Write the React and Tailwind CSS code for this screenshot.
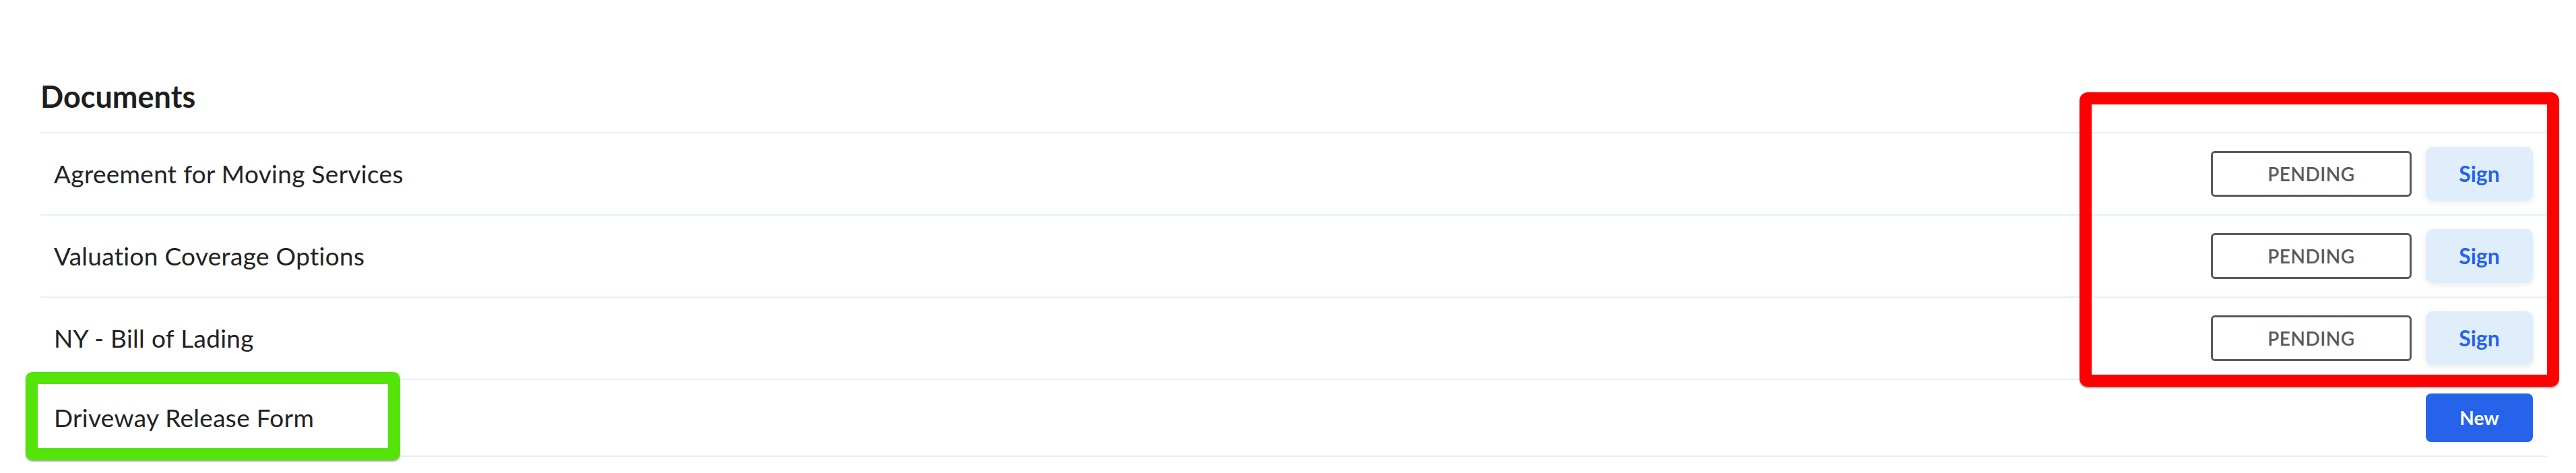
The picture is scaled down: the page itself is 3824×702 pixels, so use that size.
import React from "react";

const rows = [
  { name: "Agreement for Moving Services", status: "PENDING" },
  { name: "Valuation Coverage Options", status: "PENDING" },
  { name: "NY - Bill of Lading", status: "PENDING" },
  { name: "Driveway Release Form", status: null },
];

export default function App() {
  return (
    <div
      className="relative w-full h-[702px] bg-white overflow-hidden"
      style={{ fontFamily: "Lato, 'Open Sans', sans-serif" }}
    >
      <div className="pt-[114px] pl-[60px] pr-[44px]">
        <h2 className="text-[45px] font-bold leading-[58px] mb-[24px] text-[#1e1e1e]">
          Documents
        </h2>
        <div className="border-b-2 border-[#e4effa]">
          {rows.map((r) => (
            <div
              key={r.name}
              className="flex items-center justify-between border-t-2 border-[#e4effa] py-[20px] pl-[20px] pr-[20px]"
            >
              <span className="text-[37px] tracking-[0.3px] text-[#222222]">{r.name}</span>
              {r.status ? (
                <div className="flex items-center gap-[21px]">
                  <div className="w-[298px] h-[68px] border-[3px] border-[#595959] rounded-[6px] flex items-center justify-center text-[28px] font-semibold text-[#595959] tracking-[0.5px]">
                    {r.status}
                  </div>
                  <button className="w-[159px] h-[80px] rounded-[10px] bg-[#e0eefc] shadow-[0_3px_8px_rgba(0,0,0,0.08)] text-[#2563eb] text-[32px] font-bold flex items-center justify-center">
                    Sign
                  </button>
                </div>
              ) : (
                <button className="w-[159px] h-[72px] rounded-[8px] bg-[#2563eb] text-white text-[28px] font-bold flex items-center justify-center">
                  New
                </button>
              )}
            </div>
          ))}
        </div>
      </div>

      <div className="absolute left-[3087px] top-[137px] w-[712px] h-[437px] border-[18px] border-[#ff0000] rounded-[12px] shadow-[0_2px_2px_rgba(0,0,0,0.35)]" />
      <div className="absolute left-[38px] top-[552px] w-[556px] h-[131px] border-[18px] border-[#55e40a] rounded-[10px] shadow-[0_2px_2px_rgba(0,0,0,0.35)]" />
    </div>
  );
}
